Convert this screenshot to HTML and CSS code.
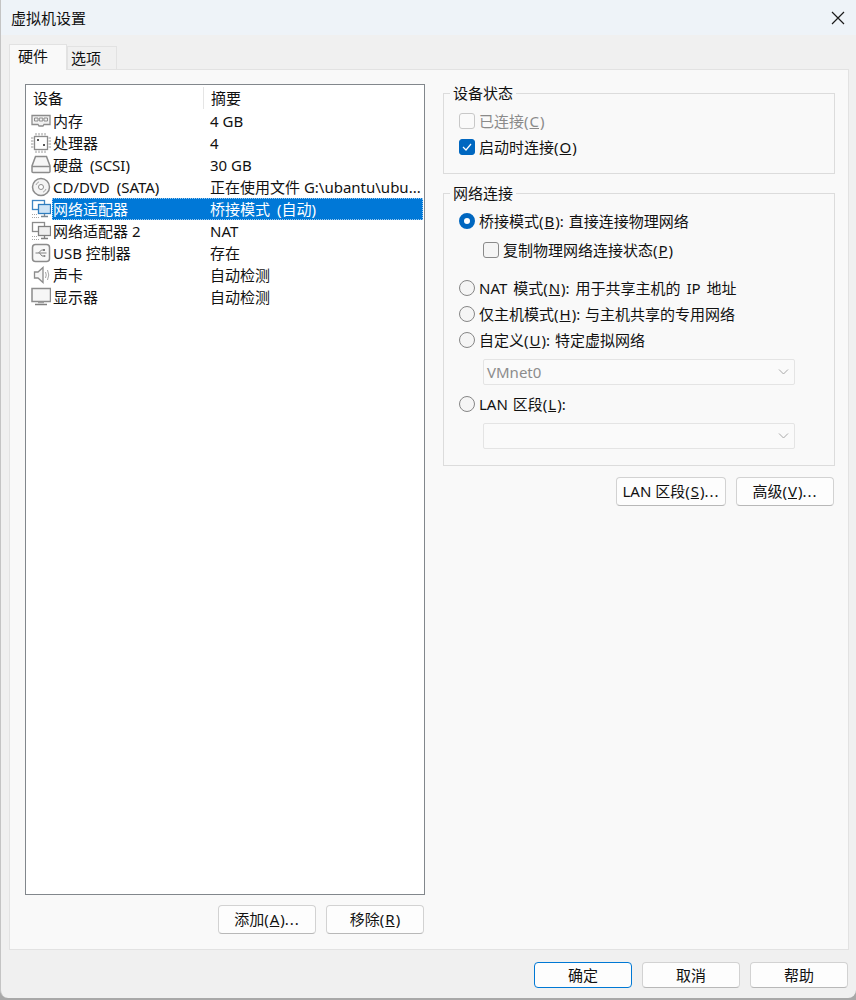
FILE: index.html
```html
<!DOCTYPE html>
<html lang="zh-CN">
<head>
    <meta charset="UTF-8">
    <title>虚拟机设置</title>
    <link rel="stylesheet" href="styles.css">
</head>
<body>
    <div class="window">
        <div class="titlebar">
            <span class="title">虚拟机设置</span>
            <svg class="close" width="14" height="14" viewBox="0 0 14 14"><path d="M1 1L13 13M13 1L1 13" stroke="#1a1a1a" stroke-width="1.200" fill="none"/></svg>
        </div>

        <div class="tabs">
            <div class="tab active">硬件</div>
            <div class="tab">选项</div>
        </div>

        <div class="panel">
            <div class="left">
                <div class="devices">
                    <div class="dev-head">
                        <div class="col-name">设备</div>
                        <div class="col-sum">摘要</div>
                    </div>
                    <div class="dev-row">
                        <div class="col-name">
                            <svg class="ico" width="20" height="20" viewBox="0 0 20 20"><path d="M1 4.500h18v9H13l-1 1.500H8l-1-1.500H1z" fill="#f2f2f2" stroke="#8c8c8c" stroke-width="1.300"/><path d="M3.500 7h3.500v3H3.500zM8.300 7h3.500v3H8.300zM13 7h3.500v3H13z" fill="none" stroke="#8c8c8c"/></svg>
                            <span>内存</span>
                        </div>
                        <div class="col-sum">4 GB</div>
                    </div>
                    <div class="dev-row">
                        <div class="col-name">
                            <svg class="ico" width="20" height="20" viewBox="0 0 20 20"><rect x="3.500" y="3.500" width="13" height="13" fill="#fff" stroke="#8c8c8c" stroke-width="1.300"/><path d="M5 0v2.500M8 0v2.500M11 0v2.500M14 0v2.500M5 17.500v2.500M8 17.500v2.500M11 17.500v2.500M14 17.500v2.500M0 5h2.500M0 8h2.500M0 11h2.500M0 14h2.500M17.500 5h2.500M17.500 8h2.500M17.500 11h2.500M17.500 14h2.500" stroke="#9a9a9a"/><path d="M6 6h2v2H6zM12 11h2v2h-2z" fill="#555"/></svg>
                            <span>处理器</span>
                        </div>
                        <div class="col-sum">4</div>
                    </div>
                    <div class="dev-row">
                        <div class="col-name">
                            <svg class="ico" width="20" height="20" viewBox="0 0 20 20"><path d="M4.500 1.500h11L19 11v5.500a1 1 0 0 1-1 1H2a1 1 0 0 1-1-1V11z" fill="#f6f6f6" stroke="#8c8c8c" stroke-width="1.500"/><path d="M1 11.500h18" stroke="#8c8c8c" stroke-width="1.500"/></svg>
                            <span class="wide">硬盘 (SCSI)</span>
                        </div>
                        <div class="col-sum">30 GB</div>
                    </div>
                    <div class="dev-row">
                        <div class="col-name">
                            <svg class="ico" width="20" height="20" viewBox="0 0 20 20"><circle cx="10" cy="10" r="8.500" fill="#f4f4f4" stroke="#8c8c8c" stroke-width="1.500"/><circle cx="10" cy="10" r="2.500" fill="#fff" stroke="#8c8c8c"/><path d="M5 8A5.500 5.500 0 0 1 8 4.800M15 12a5.500 5.500 0 0 1-3 3.200" stroke="#a5a5a5" fill="none"/></svg>
                            <span class="wide">CD/DVD (SATA)</span>
                        </div>
                        <div class="col-sum">正在使用文件 G:\ubantu\ubu...</div>
                    </div>
                    <div class="dev-row selected">
                        <div class="col-name">
                            <svg class="ico" width="20" height="20" viewBox="0 0 20 20"><rect x="1.500" y="1.500" width="12" height="9" fill="#fff" stroke="#3f86c4" stroke-width="1.300"/><rect x="7.500" y="5.500" width="12" height="9" fill="#cfe4f6" stroke="#2f7dbf" stroke-width="1.300"/><path d="M13.500 15v2M10 17.500h7" stroke="#7a8894" stroke-width="1.300"/><path d="M1 15.500h1M3 15.500h1M5 15.500h1M1 18.500h1M3 18.500h1M5 18.500h1M7 18.500h1" stroke="#a5a5a5"/></svg>
                            <span>网络适配器</span>
                        </div>
                        <div class="col-sum wide">桥接模式 (自动)</div>
                    </div>
                    <div class="dev-row">
                        <div class="col-name">
                            <svg class="ico" width="20" height="20" viewBox="0 0 20 20"><rect x="1.500" y="1.500" width="12" height="9" fill="#fff" stroke="#8c8c8c" stroke-width="1.300"/><rect x="7.500" y="5.500" width="12" height="9" fill="#efefef" stroke="#808080" stroke-width="1.300"/><path d="M13.500 15v2M10 17.500h7" stroke="#808080" stroke-width="1.300"/><path d="M1 15.500h1M3 15.500h1M5 15.500h1M1 18.500h1M3 18.500h1M5 18.500h1M7 18.500h1" stroke="#a5a5a5"/></svg>
                            <span>网络适配器 2</span>
                        </div>
                        <div class="col-sum">NAT</div>
                    </div>
                    <div class="dev-row">
                        <div class="col-name">
                            <svg class="ico" width="20" height="20" viewBox="0 0 20 20"><rect x="1.500" y="1.500" width="17" height="17" rx="3" fill="#f8f8f8" stroke="#8c8c8c" stroke-width="1.500"/><path d="M4.500 10h11M7.500 10l3-3h2M8.500 10l2.500 3h2" stroke="#808080" fill="none"/><path d="M12 6h2v2h-2z" fill="#808080"/><circle cx="13.500" cy="13" r="1" fill="#808080"/></svg>
                            <span>USB 控制器</span>
                        </div>
                        <div class="col-sum">存在</div>
                    </div>
                    <div class="dev-row">
                        <div class="col-name">
                            <svg class="ico" width="20" height="20" viewBox="0 0 20 20"><path d="M3.500 7h3.500l5-4.500v15L7 13H3.500z" fill="#f6f6f6" stroke="#8c8c8c" stroke-width="1.300"/><path d="M14.500 7q1.500 3 0 6M16.500 5q2.500 5 0 10" stroke="#a5a5a5" fill="none"/></svg>
                            <span>声卡</span>
                        </div>
                        <div class="col-sum">自动检测</div>
                    </div>
                    <div class="dev-row">
                        <div class="col-name">
                            <svg class="ico" width="20" height="20" viewBox="0 0 20 20"><rect x="1" y="1.500" width="18.500" height="13" fill="#f6f6f6" stroke="#8c8c8c" stroke-width="1.500"/><path d="M7 15.500h6" stroke="#a0a0a0" stroke-width="1.500"/><path d="M4 17.500h12" stroke="#808080" stroke-width="1.500"/></svg>
                            <span>显示器</span>
                        </div>
                        <div class="col-sum">自动检测</div>
                    </div>
                </div>
                <div class="btn-row">
                    <button class="btn">添加(<u>A</u>)<span class="dots">...</span></button>
                    <button class="btn">移除(<u>R</u>)</button>
                </div>
            </div>

            <div class="right">
                <div class="group status-group">
                    <div class="legend">设备状态</div>
                    <div class="opt disabled"><span class="check"></span><span>已连接(<u>C</u>)</span></div>
                    <div class="opt"><span class="check on"><svg width="10" height="8" viewBox="0 0 10 8"><path d="M1 4l3 3 5-6" stroke="#fff" stroke-width="1.200" fill="none"/></svg></span><span>启动时连接(<u>O</u>)</span></div>
                </div>

                <div class="group net-group">
                    <div class="legend">网络连接</div>
                    <div class="opt bridge"><span class="radio on"></span><span>桥接模式(<u>B</u>): 直接连接物理网络</span></div>
                    <div class="opt sub replicate"><span class="check plain"></span><span>复制物理网络连接状态(<u>P</u>)</span></div>
                    <div class="opt nat"><span class="radio"></span><span>NAT 模式(<u>N</u>): 用于共享主机的 IP 地址</span></div>
                    <div class="opt host"><span class="radio"></span><span>仅主机模式(<u>H</u>): 与主机共享的专用网络</span></div>
                    <div class="opt custom"><span class="radio"></span><span>自定义(<u>U</u>): 特定虚拟网络</span></div>
                    <div class="select first-select"><span>VMnet0</span><svg width="11" height="6" viewBox="0 0 11 6"><path d="M1 .5l4.500 4.500L10 .5" stroke="#a8a8a8" fill="none"/></svg></div>
                    <div class="opt lan"><span class="radio"></span><span>LAN 区段(<u>L</u>):</span></div>
                    <div class="select second-select"><span></span><svg width="11" height="6" viewBox="0 0 11 6"><path d="M1 .5l4.500 4.500L10 .5" stroke="#a8a8a8" fill="none"/></svg></div>
                </div>

                <div class="right-btns">
                    <button class="btn">LAN 区段(<u>S</u>)<span class="dots">...</span></button>
                    <button class="btn">高级(<u>V</u>)<span class="dots">...</span></button>
                </div>
            </div>
        </div>

        <div class="footer">
            <button class="btn default">确定</button>
            <button class="btn">取消</button>
            <button class="btn">帮助</button>
        </div>
    </div>
</body>
</html>
```

FILE: styles.css
```css
* {
    box-sizing: border-box;
}
html, body {
    margin: 0;
    padding: 0;
    background: #a8a8a8;
}
body {
    font-family: "Noto Sans", "Noto Sans CJK SC", sans-serif;
    font-size: 15px;
    line-height: 20px;
    color: #111;
}
u {
    margin: 0 1px;
}
.window {
    width: 856px;
    height: 998px;
    background: #f0f0f0;
    border-left: 1px solid #c4c4c4;
    border-radius: 0 0 8px 8px;
    display: flex;
    flex-direction: column;
}
.titlebar {
    height: 35px;
    background: #eef3f8;
    display: flex;
    align-items: center;
    justify-content: space-between;
    padding: 0 10px;
    flex-shrink: 0;
}
.close {
    margin-right: 1px;
}
.tabs {
    display: flex;
    align-items: flex-end;
    height: 34px;
    padding-left: 8px;
    flex-shrink: 0;
}
.tab {
    width: 50px;
    height: 23px;
    padding-left: 3px;
    border: 1px solid #e2e2e2;
    border-bottom: 0;
    line-height: 23px;
    background: #f0f0f0;
}
.tab.active {
    width: 58px;
    height: 26px;
    padding-left: 8px;
    line-height: 22px;
    background: #f9f9f9;
    position: relative;
    top: 1px;
    z-index: 1;
}
.panel {
    margin: 0 7px 0 8px;
    height: 881px;
    background: #f9f9f9;
    border: 1px solid #e2e2e2;
    display: flex;
    padding: 14px 13px 0 15px;
}
.left {
    width: 400px;
    display: flex;
    flex-direction: column;
}
.devices {
    height: 811px;
    background: #fff;
    border: 1px solid #82878c;
}
.dev-head, .dev-row {
    display: flex;
    height: 22px;
    align-items: center;
}
.dev-head {
    height: 25px;
}
.dev-head .col-name {
    padding-left: 7px;
    border-right: 1px solid #e5e5e5;
    height: 22px;
    line-height: 22px;
}
.dev-head .col-sum {
    padding-left: 7px;
}
.col-name {
    width: 178px;
    display: flex;
    align-items: center;
    padding-left: 5px;
    white-space: nowrap;
    flex-shrink: 0;
}
.col-sum {
    padding-left: 6px;
    white-space: nowrap;
}
.wide {
    word-spacing: 3px;
}
.ico {
    margin-right: 2px;
    flex-shrink: 0;
}
.dev-row.selected {
    position: relative;
    color: #fff;
    background: linear-gradient(to right, #fff 26px, #0078d7 26px);
    margin-right: 1px;
}
.dev-row.selected::after {
    content: "";
    position: absolute;
    top: 0;
    bottom: 0;
    left: 26px;
    right: 0;
    border: 1px dotted #9cc9ee;
}
.btn-row {
    display: flex;
    justify-content: flex-end;
    gap: 10px;
    margin-top: 10px;
    padding-right: 1px;
}
.btn {
    width: 98px;
    height: 29px;
    padding: 0 0 2px;
    background: #fdfdfd;
    border: 1px solid #d2d2d2;
    border-bottom-color: #b8b8b8;
    border-radius: 4px;
    font-family: inherit;
    font-size: 15px;
    color: #111;
}
.dots {
    letter-spacing: 1px;
}
.right {
    width: 392px;
    margin-left: 18px;
    display: flex;
    flex-direction: column;
}
.group {
    border: 1px solid #dcdcdc;
    position: relative;
    margin-top: 9px;
}
.legend {
    position: absolute;
    top: -11px;
    left: 6px;
    padding: 0 3px;
    background: #f9f9f9;
    line-height: 20px;
}
.status-group {
    height: 81px;
    padding: 14px 15px 0;
}
.net-group {
    height: 273px;
    margin-top: 19px;
    padding: 14px 15px 0;
}
.opt {
    display: flex;
    align-items: center;
    height: 26px;
    white-space: nowrap;
    word-spacing: 1px;
}
.opt.disabled {
    color: #8a8a8a;
}
.sub {
    padding-left: 24px;
}
.replicate {
    margin-top: 3px;
}
.nat {
    margin-top: 12px;
    word-spacing: 2px;
}
.check {
    width: 16px;
    height: 16px;
    margin-right: 4px;
    border: 1px solid #c8c8c8;
    border-radius: 3px;
    display: flex;
    align-items: center;
    justify-content: center;
    background: #fafafa;
    flex-shrink: 0;
}
.check.plain {
    border-color: #8a8a8a;
    background: #f5f5f5;
}
.check.on {
    background: #0067c0;
    border-color: #0067c0;
}
.radio {
    width: 16px;
    height: 16px;
    margin-right: 4px;
    border: 1px solid #868686;
    border-radius: 50%;
    background: #f5f5f5;
    flex-shrink: 0;
}
.radio.on {
    border: 5px solid #0067c0;
    background: #fff;
}
.select {
    margin-left: 24px;
    width: 312px;
    height: 26px;
    border: 1px solid #e4e4e4;
    border-radius: 2px;
    background: #fafafa;
    color: #8c8c8c;
    display: flex;
    align-items: center;
    justify-content: space-between;
    padding: 0 5px 0 3px;
}
.first-select, .lan, .second-select {
    margin-top: 6px;
}
.right-btns {
    display: flex;
    justify-content: flex-end;
    gap: 10px;
    margin-top: 11px;
    padding-right: 1px;
}
.right-btns .btn:first-child {
    width: 110px;
}
.footer {
    display: flex;
    justify-content: flex-end;
    gap: 10px;
    padding: 12px 8px 0 0;
}
.footer .btn {
    height: 26px;
}
.btn.default {
    border: 1px solid #0078d4;
}
```
